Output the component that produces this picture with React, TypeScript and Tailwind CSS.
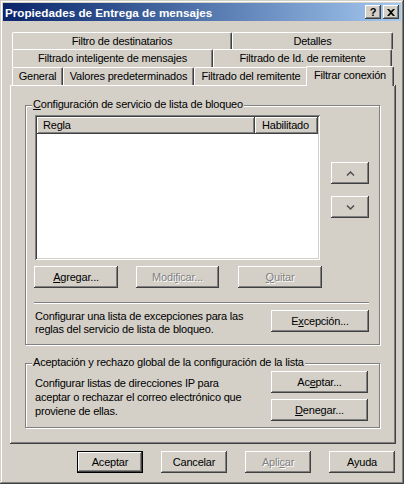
import React from 'react';

// classic 3D edges
const raised =
  'shadow-[inset_-1px_-1px_#404040,inset_1px_1px_#ffffff,inset_-2px_-2px_#808080,inset_2px_2px_#d4d0c8]';
const sunken =
  'shadow-[inset_1px_1px_#808080,inset_-1px_-1px_#ffffff,inset_2px_2px_#404040,inset_-2px_-2px_#d4d0c8]';
const etched = 'border border-[#808080] shadow-[inset_1px_1px_#ffffff,1px_1px_#ffffff]';
const tab =
  'h-full flex items-center justify-center border-l border-t border-white border-r border-r-[#404040] shadow-[inset_-1px_0_#808080] rounded-t-[2px]';

interface BtnProps {
  children: React.ReactNode;
  className?: string;
  disabled?: boolean;
  isDefault?: boolean;
}

const Btn: React.FC<BtnProps> = ({ children, className = '', disabled = false, isDefault = false }) => (
  <button
    type="button"
    className={`flex items-center justify-center bg-[#d4d0c8] h-[22px] ${
      isDefault ? 'border border-black ' + raised : raised
    } ${disabled ? 'text-[#808080] [text-shadow:1px_1px_#ffffff]' : 'text-black'} ${className}`}
  >
    {children}
  </button>
);

const GroupBox: React.FC<{ label: React.ReactNode; className?: string; children: React.ReactNode }> = ({
  label,
  className = '',
  children,
}) => (
  <div className={`relative ${etched} ${className}`}>
    <span className="absolute left-[6px] top-[-8px] px-[1px] bg-[#d4d0c8]">{label}</span>
    {children}
  </div>
);

const Chevron: React.FC<{ up?: boolean }> = ({ up = false }) => (
  <svg width="9" height="5" viewBox="0 0 9 5">
    <path
      d={up ? 'M1 4.5 L4.5 1 L8 4.5' : 'M1 0.5 L4.5 4 L8 0.5'}
      fill="none"
      stroke="#505050"
      strokeWidth="1.5"
    />
  </svg>
);

export default function App() {
  return (
    <div className="w-[404px] h-[484px] bg-[#d4d0c8] p-[3px] shadow-[inset_-1px_-1px_#404040,inset_1px_1px_#d4d0c8,inset_-2px_-2px_#808080,inset_2px_2px_#ffffff] font-['Liberation_Sans',Arial,sans-serif] text-[11px] leading-[13px] tracking-[-0.2px] text-black flex flex-col overflow-hidden select-none">
      {/* title bar */}
      <div className="h-[18px] flex items-center bg-linear-to-r from-[#0a246a] to-[#a6caf0] pl-[2px] pr-[2px]">
        <span className="flex-1 font-bold text-white text-[11.7px] tracking-normal">
          Propiedades de Entrega de mensajes
        </span>
        <div className={`w-[16px] h-[14px] flex items-center justify-center bg-[#d4d0c8] font-bold ${raised}`}>?</div>
        <div className={`ml-[2px] w-[16px] h-[14px] flex items-center justify-center bg-[#d4d0c8] ${raised}`}>
          <svg width="8" height="7" viewBox="0 0 8 7">
            <path d="M0 0h2l2 2 2-2h2L5 3.5 8 7H6L4 5 2 7H0l3-3.5z" fill="#000" />
          </svg>
        </div>
      </div>

      {/* tabs */}
      <div className="ml-[9px] mt-[11px] flex flex-col">
        <div className="flex h-[17px]">
          <div className={`${tab} w-[220px]`}>Filtro de destinatarios</div>
          <div className={`${tab} w-[161px]`}>Detalles</div>
        </div>
        <div className="flex h-[18px]">
          <div className={`${tab} w-[201px]`}>Filtrado inteligente de mensajes</div>
          <div className={`${tab} w-[179px]`}>Filtrado de Id. de remitente</div>
        </div>
        <div className="flex h-[18px] items-end">
          <div className={`${tab} w-[51px]`}>General</div>
          <div className={`${tab} w-[131px]`}>Valores predeterminados</div>
          <div className={`${tab} w-[114px]`}>Filtrado del remitente</div>
          <div className="relative z-10 ml-[-2px] -mb-[1px] w-[88px] h-[20px] bg-[#d4d0c8] flex items-start justify-center pt-[2px] border-l border-t border-white border-r border-r-[#404040] shadow-[inset_-1px_0_#808080] rounded-t-[2px]">
            Filtrar conexión
          </div>
        </div>
      </div>

      {/* tab page */}
      <div className={`ml-[7px] w-[386px] h-[359px] ${raised} pl-[15px] pt-[20px] flex flex-col`}>
        <GroupBox
          className="w-[355px] h-[240px] pl-[9px] pr-[10px] pt-[9px] flex flex-col"
          label={
            <>
              <u>C</u>onfiguración de servicio de lista de bloqueo
            </>
          }
        >
          <div className="flex">
            <div className={`w-[285px] h-[145px] bg-white p-[2px] ${sunken}`}>
              <div className="flex h-[17px]">
                <div className={`w-[218px] h-full flex items-center pl-[6px] bg-[#d4d0c8] ${raised}`}>Regla</div>
                <div className={`w-[63px] h-full flex items-center pl-[7px] bg-[#d4d0c8] ${raised}`}>Habilitado</div>
              </div>
            </div>
            <div className="ml-[11px] pt-[47px] flex flex-col">
              <Btn className="w-[38px]">
                <Chevron up />
              </Btn>
              <Btn className="w-[38px] mt-[12px]">
                <Chevron />
              </Btn>
            </div>
          </div>

          <div className="flex mt-[6px] ml-[-1px]">
            <Btn className="w-[84px]">
              <span>
                <u>A</u>gregar...
              </span>
            </Btn>
            <Btn className="w-[83px] ml-[18px]" disabled>
              <span>
                Modi<u>f</u>icar...
              </span>
            </Btn>
            <Btn className="w-[84px] ml-[19px]" disabled>
              <span>
                <u>Q</u>uitar
              </span>
            </Btn>
          </div>

          <div className="mt-[14px] ml-[-1px] w-[335px] h-[2px] border-t border-t-[#808080] border-b border-b-white" />

          <div className="flex mt-[6px]">
            <p className="flex-1">
              Configurar una lista de excepciones para las
              <br />
              reglas del servicio de lista de bloqueo.
            </p>
            <Btn className="w-[98px]">
              <span>
                E<u>x</u>cepción...
              </span>
            </Btn>
          </div>
        </GroupBox>

        <GroupBox
          className="mt-[18px] w-[355px] h-[65px] pl-[9px] pr-[11px] pt-[7px] flex"
          label="Aceptación y rechazo global de la configuración de la lista"
        >
          <p className="flex-1 mt-[5px] leading-[14px]">
            Configurar listas de direcciones IP para
            <br />
            aceptar o rechazar el correo electrónico que
            <br />
            proviene de ellas.
          </p>
          <div className="flex flex-col">
            <Btn className="w-[97px]">
              <span>
                Ac<u>e</u>ptar...
              </span>
            </Btn>
            <Btn className="w-[97px] mt-[6px]">
              <span>
                <u>D</u>enegar...
              </span>
            </Btn>
          </div>
        </GroupBox>
      </div>

      {/* dialog buttons */}
      <div className="flex mt-[7px] ml-[74px]">
        <Btn className="w-[66px]" isDefault>
          Aceptar
        </Btn>
        <Btn className="w-[66px] ml-[18px]">Cancelar</Btn>
        <Btn className="w-[66px] ml-[18px]" disabled>
          <span>
            Apli<u>c</u>ar
          </span>
        </Btn>
        <Btn className="w-[66px] ml-[18px]">Ayuda</Btn>
      </div>
    </div>
  );
}
